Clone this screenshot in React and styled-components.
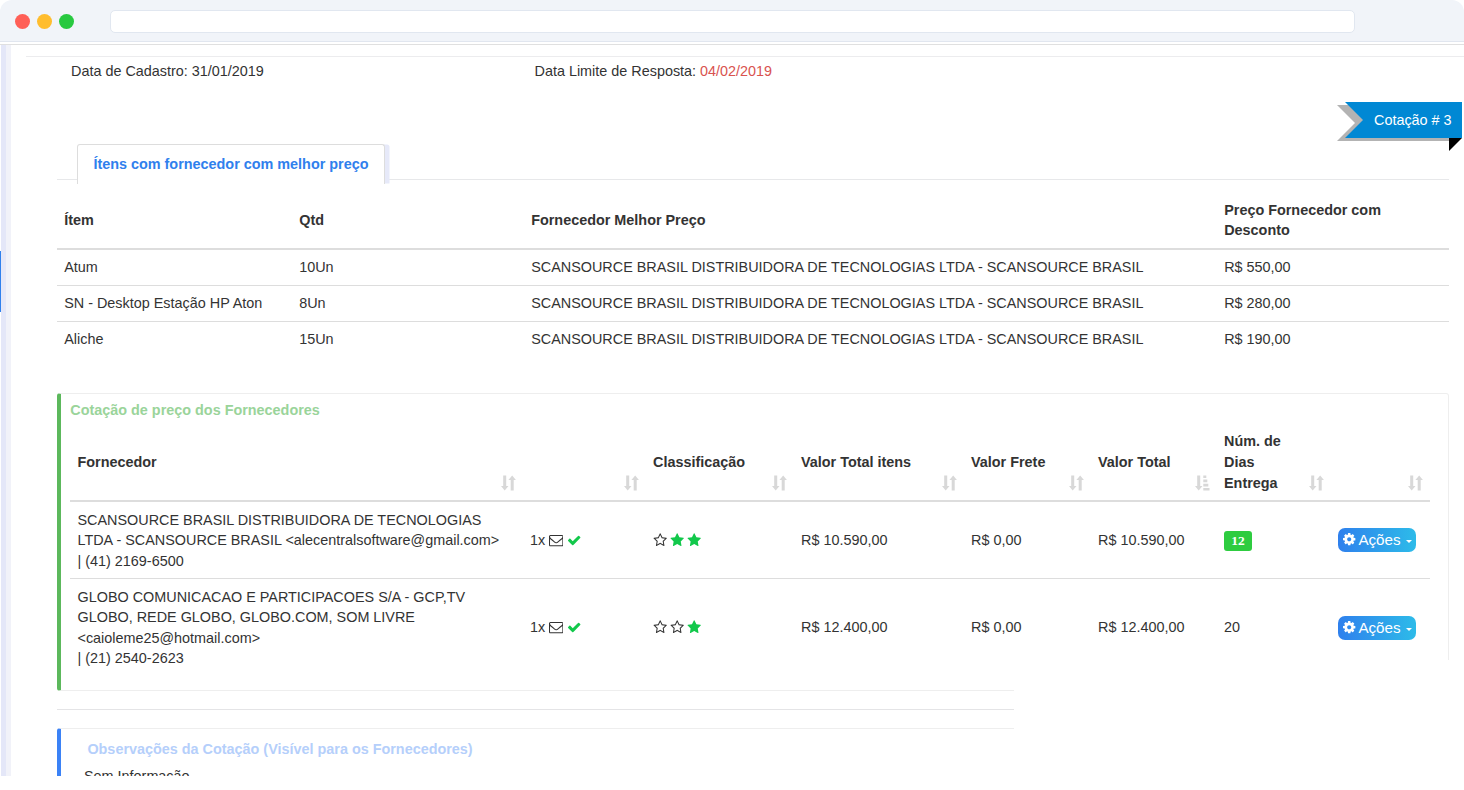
import React from 'react'
import styled, { createGlobalStyle } from 'styled-components'

const GlobalStyle = createGlobalStyle`
  * { box-sizing: border-box; }
  body {
    margin: 0;
    background: #fff;
    color: #333;
    font-family: "Liberation Sans", Arial, sans-serif;
    font-size: 14.4px;
  }
`

/* browser window */
const Window = styled.div`
  height: 790px;
  overflow: hidden;
`

const TitleBar = styled.div`
  height: 42px;
  display: flex;
  align-items: center;
  padding: 0 109px 0 15px;
  background: #f1f4f9;
  border-bottom: 1px solid #e1e6ef;
  border-radius: 12px 12px 0 0;
`

const Dots = styled.div`
  display: flex;
  gap: 7px;
  width: 95px;
  margin-top: 2px;
`

const Dot = styled.span`
  width: 15px;
  height: 15px;
  border-radius: 50%;
  background: ${({ $color }) => $color};
`

const Address = styled.div`
  flex: 1;
  height: 23px;
  margin-top: 2px;
  background: #fff;
  border: 1px solid #e1e7f0;
  border-radius: 5px;
`

const Viewport = styled.div`
  position: relative;
  display: flex;
  height: 732px;
  margin-top: 2px;
  border-top: 1px solid #e0e0e0;
  overflow: hidden;
`

const Rail = styled.div`
  width: 11px;
  flex: none;
  display: flex;
  background: linear-gradient(to right, #fff 1px, #e4e7f8 1px, #e4e7f8 6px, #f1f2f9 6px);
`

const RailMark = styled.div`
  width: 1px;
  height: 61px;
  margin-top: 206px;
  background: #2f80ed;
`

const Page = styled.div`
  flex: 1;
  padding-top: 11px;
`

const TopRule = styled.div`
  height: 1px;
  margin-left: 15px;
  background: #ececee;
`

const Content = styled.div`
  margin: 0 15px 0 46px;
`

/* dates */
const Dates = styled.div`
  display: flex;
  height: 28px;
  padding-left: 14px;
  line-height: 28px;
`

const DateField = styled.div`
  width: 463.5px;
`

const Late = styled.span`
  color: #d9534f;
`

const RibbonRow = styled.div`
  display: flex;
  justify-content: flex-end;
  height: 59px;
  padding-top: 17px;
  margin-right: -13px;
`

const Ribbon = styled.div`
  position: relative;
  width: 125px;
  height: 36px;
  padding-left: 37px;
  line-height: 36px;
  color: #fff;
  white-space: nowrap;

  &::before,
  &::after {
    content: '';
    position: absolute;
    z-index: -1;
    height: 36px;
    clip-path: polygon(0 0, 100% 0, 100% 100%, 0 100%, 18px 50%);
  }
  &::before {
    left: 0;
    top: 3px;
    width: 113px;
    background: #b3b3b3;
  }
  &::after {
    left: 8px;
    top: 0;
    width: 117px;
    background: #0088d4;
  }
`

const RibbonFold = styled.span`
  position: absolute;
  right: 0;
  top: 36px;
  width: 13px;
  height: 13px;
  background: #000;
  clip-path: polygon(0 0, 100% 0, 0 100%);
`

/* tabs */
const Tabs = styled.div`
  display: flex;
  height: 36px;
  padding-left: 20px;
  border-bottom: 1px solid #e7e8ea;
`

const Tab = styled.div`
  width: 308px;
  height: 40px;
  padding-left: 15.4px;
  line-height: 39px;
  font-weight: bold;
  color: #2f80ed;
  background: #fff;
  border: 1px solid #ddd;
  border-bottom: 0;
  border-radius: 3px 3px 0 0;
  box-shadow: 5px 0 0 -0.5px #e6e9f9;
`

/* best price table */
const ItemRow = styled.div`
  display: grid;
  grid-template-columns: 235px 232px 693px 232px;
  align-items: center;
  height: ${({ $first }) => ($first ? '35px' : '36px')};
  line-height: 20px;
  padding-bottom: 1px;
  border-top: ${({ $first }) => ($first ? '0' : '1px solid #ddd')};
`

const ItemHead = styled(ItemRow)`
  height: 70px;
  padding: 12px 0 0;
  font-weight: bold;
  border-top: 0;
  border-bottom: 2px solid #ddd;
`

const ItemCell = styled.div`
  padding: 0 7.2px;
  white-space: ${({ $wrap }) => ($wrap ? 'normal' : 'nowrap')};
`

/* suppliers */
const Callout = styled.div`
  height: ${({ $height }) => $height};
  border: 1px solid #eee;
  border-left: 4px solid ${({ $color }) => $color};
  border-radius: 3px;
`

const QuoteCallout = styled(Callout)`
  margin-top: 36px;
  padding: 6px 18px 0 9px;
`

const NotesCallout = styled(Callout)`
  padding: 10px 23px 0;
`

const CalloutTitle = styled.h4`
  margin: 0;
  padding-left: ${({ $indent }) => $indent || '0.3px'};
  font-size: 14.4px;
  line-height: 20px;
  color: ${({ $color }) => $color};
`

const QuoteRow = styled.div`
  display: grid;
  grid-template-columns: 452.5px 123px 148px 170px 127px 126px 114px 99.5px;
  align-items: center;
  height: ${({ $height }) => $height};
  line-height: 20.6px;
  border-top: ${({ $line }) => ($line ? '1px solid #ddd' : '0')};
`

const QuoteHead = styled(QuoteRow)`
  height: 82px;
  padding-top: 5px;
  line-height: 21px;
  font-weight: bold;
  border-bottom: 2px solid #ddd;
`

const QuoteHeadCell = styled.div`
  display: flex;
  align-items: center;
  justify-content: space-between;
  height: 63px;
  padding: 0 7px 0 7.5px;
`

const SortIcon = styled.svg`
  width: 15px;
  height: 16px;
  flex: none;
  align-self: flex-end;
  margin-bottom: 3px;
  fill: #d8d8d8;
`

const QuoteCell = styled.div`
  display: ${({ $inline }) => ($inline ? 'flex' : 'block')};
  align-items: center;
  gap: ${({ $gap }) => $gap || '4px'};
  padding-left: 7.5px;
  white-space: nowrap;
`

const Supplier = styled(QuoteCell)`
  padding-top: 0.8px;
`

const Glyph = styled.svg`
  flex: none;
  width: 14.4px;
  height: 14.4px;
  fill: ${({ $color }) => $color || '#333'};
`

const Stars = styled.div`
  display: flex;
  gap: 3px;
  margin-left: -0.5px;
`

const DaysBadge = styled.span`
  display: block;
  width: 28px;
  height: 20px;
  margin-top: 1px;
  border-radius: 3px;
  background: #2ecc40;
  color: #fff;
  font: bold 13.5px/19px "Liberation Serif", serif;
  text-align: center;
`

const ActionButton = styled.button`
  display: flex;
  align-items: center;
  width: 78px;
  height: 24px;
  padding: 0 4px 1px 3.5px;
  border: 0;
  border-radius: 7px;
  background: linear-gradient(to right, #2f80ed, #2dbbe9);
  color: #fff;
  font: 15.2px "Liberation Sans", Arial, sans-serif;
`

const ActionText = styled.span`
  margin: 0 5px 0 2.5px;
`

const Caret = styled.span`
  margin-top: 4px;
  border-top: 3px solid #fff;
  border-left: 3px solid transparent;
  border-right: 3px solid transparent;
`

const Divider = styled.div`
  height: 1px;
  margin: 18px 0;
  background: #e4e4e6;
`

const Notes = styled.p`
  margin: 7px 0 0;
  line-height: 21px;
`

/* empty corner that covers the lower right of the page */
const Corner = styled.div`
  position: absolute;
  right: 0;
  bottom: 0;
  width: 450px;
  height: 116px;
  background: #fff;
`

const paths = {
  star: 'M1728 647q0 22-26 48l-363 354 86 500q1 7 1 20 0 21-10.5 35.5t-30.5 14.5q-19 0-40-12l-449-236-449 236q-22 12-40 12-21 0-31.5-14.5t-10.5-35.5q0-6 2-20l86-500-364-354q-25-27-25-48 0-37 56-46l502-73 225-455q19-41 49-41t49 41l225 455 502 73q56 9 56 46z',
  starO: 'M1201 1004l306-297-422-62-189-382-189 382-422 62 306 297-73 421 378-199 377 199zm527-357q0 22-26 48l-363 354 86 500q1 7 1 20 0 50-41 50-19 0-40-12l-449-236-449 236q-22 12-40 12-21 0-31.5-14.5t-10.5-35.5q0-6 2-20l86-500-364-354q-25-27-25-48 0-37 56-46l502-73 225-455q19-41 49-41t49 41l225 455 502 73q56 9 56 46z',
  check: 'M1671 566q0 40-28 68l-724 724-136 136q-28 28-68 28t-68-28l-136-136-362-362q-28-28-28-68t28-68l136-136q28-28 68-28t68 28l294 295 656-657q28-28 68-28t68 28l136 136q28 28 28 68z',
  envelope: 'M1664 1504v-768q-32 36-69 66-268 206-426 338-51 43-83 67t-86.5 48.5-102.5 24.5h-2q-48 0-102.5-24.5t-86.5-48.5-83-67q-158-132-426-338-37-30-69-66v768q0 13 9.5 22.5t22.5 9.5h1472q13 0 22.5-9.5t9.5-22.5zm0-1051v-24.5l-.5-13-3-12.5-5.5-9-9-7.5-14-2.5h-1472q-13 0-22.5 9.5t-9.5 22.5q0 168 147 284 193 152 401 317 6 5 35 29.5t46 37.5 44.5 31.5 50.5 27.5 43 9h2q20 0 43-9t50.5-27.5 44.5-31.5 46-37.5 35-29.5q208-165 401-317 54-43 100.5-115.5t46.5-131.5zm128-37v1088q0 66-47 113t-113 47h-1472q-66 0-113-47t-47-113v-1088q0-66 47-113t113-47h1472q66 0 113 47t47 113z',
  cog: 'M1152 896q0-106-75-181t-181-75-181 75-75 181 75 181 181 75 181-75 75-181zm512-109v222q0 12-8 23t-20 13l-185 28q-19 54-39 91 35 50 107 138 10 12 10 25t-9 23q-27 37-99 108t-94 71q-12 0-26-9l-138-108q-44 23-91 38-16 136-29 186-7 28-36 28h-222q-14 0-24.5-8.5t-11.5-21.5l-28-184q-49-16-90-37l-141 107q-10 9-25 9-14 0-25-11-126-114-165-168-7-10-7-23 0-12 8-23 15-21 51-66.5t54-70.5q-27-50-41-99l-183-27q-13-2-21-12.5t-8-23.5v-222q0-12 8-23t19-13l186-28q14-46 39-92-40-57-107-138-10-12-10-24 0-10 9-23 26-36 98.5-107.5t94.5-71.5q13 0 26 10l138 107q44-23 91-38 16-136 29-186 7-28 36-28h222q14 0 24.5 8.5t11.5 21.5l28 184q49 16 90 37l142-107q9-9 24-9 13 0 25 10 129 119 165 170 7 8 7 22 0 12-8 23-15 21-51 66.5t-54 70.5q26 50 41 98l183 28q13 2 21 12.5t8 23.5z',
}

const Icon = ({ name, color }) => (
  <Glyph viewBox="0 0 1792 1792" $color={color}>
    <path d={paths[name]} />
  </Glyph>
)

const Sort = ({ sorted }) => (
  <SortIcon viewBox="0 0 15 16">
    <path d="M2.2 .5h3v10.5h2.3l-3.8 4.5-3.7-4.5h2.2z" />
    {sorted ? (
      <path d="M8.3 .5h3v2.5h-3zM8.3 4.5h4v2.7h-4zM8.3 8.7h5v2.7h-5zM8.3 12.9h6.2v2.6h-6.2z" />
    ) : (
      <path d="M9.7 15.5h3v-10.5h2.2l-3.7-4.5-3.8 4.5h2.3z" />
    )}
  </SortIcon>
)

const company = 'SCANSOURCE BRASIL DISTRIBUIDORA DE TECNOLOGIAS LTDA - SCANSOURCE BRASIL'

const items = [
  { name: 'Atum', qty: '10Un', price: 'R$ 550,00' },
  { name: 'SN - Desktop Estação HP Aton', qty: '8Un', price: 'R$ 280,00' },
  { name: 'Aliche', qty: '15Un', price: 'R$ 190,00' },
]

const quoteHeads = [
  ['Fornecedor'],
  [''],
  ['Classificação'],
  ['Valor Total itens'],
  ['Valor Frete'],
  ['Valor Total'],
  ['Núm. de', 'Dias', 'Entrega'],
  [''],
]

const quotes = [
  {
    supplier: [
      'SCANSOURCE BRASIL DISTRIBUIDORA DE TECNOLOGIAS',
      'LTDA - SCANSOURCE BRASIL <alecentralsoftware@gmail.com>',
      '| (41) 2169-6500',
    ],
    stars: [false, true, true],
    total: 'R$ 10.590,00',
    days: 12,
    best: true,
    height: '76px',
  },
  {
    supplier: [
      'GLOBO COMUNICACAO E PARTICIPACOES S/A - GCP,TV',
      'GLOBO, REDE GLOBO, GLOBO.COM, SOM LIVRE',
      '<caioleme25@hotmail.com>',
      '| (21) 2540-2623',
    ],
    stars: [false, false, true],
    total: 'R$ 12.400,00',
    days: 20,
    height: '98px',
  },
]

const App = () => {
  return (
    <Window>
      <GlobalStyle />
      <TitleBar>
        <Dots>
          <Dot $color="#ff5f57" />
          <Dot $color="#ffbd2e" />
          <Dot $color="#28c940" />
        </Dots>
        <Address />
      </TitleBar>
      <Viewport>
        <Rail>
          <RailMark />
        </Rail>
        <Page>
          <TopRule />
          <Content>
            <Dates>
              <DateField>Data de Cadastro: 31/01/2019</DateField>
              <DateField>
                Data Limite de Resposta: <Late>04/02/2019</Late>
              </DateField>
            </Dates>
            <RibbonRow>
              <Ribbon>
                Cotação # 3
                <RibbonFold />
              </Ribbon>
            </RibbonRow>
            <Tabs>
              <Tab>Ítens com fornecedor com melhor preço</Tab>
            </Tabs>
            <ItemHead>
              <ItemCell>Ítem</ItemCell>
              <ItemCell>Qtd</ItemCell>
              <ItemCell>Fornecedor Melhor Preço</ItemCell>
              <ItemCell $wrap>Preço Fornecedor com Desconto</ItemCell>
            </ItemHead>
            {items.map((item, i) => (
              <ItemRow key={item.name} $first={i === 0}>
                <ItemCell>{item.name}</ItemCell>
                <ItemCell>{item.qty}</ItemCell>
                <ItemCell>{company}</ItemCell>
                <ItemCell>{item.price}</ItemCell>
              </ItemRow>
            ))}
            <QuoteCallout $color="#5cb85c" $height="298px">
              <CalloutTitle $color="#9ad49a">Cotação de preço dos Fornecedores</CalloutTitle>
              <QuoteHead>
                {quoteHeads.map((lines, i) => (
                  <QuoteHeadCell key={i}>
                    <div>
                      {lines.map((line) => (
                        <div key={line}>{line}</div>
                      ))}
                    </div>
                    <Sort sorted={lines[0] === 'Valor Total'} />
                  </QuoteHeadCell>
                ))}
              </QuoteHead>
              {quotes.map((quote, i) => (
                <QuoteRow key={quote.total} $height={quote.height} $line={i > 0}>
                  <Supplier>
                    {quote.supplier.map((line) => (
                      <div key={line}>{line}</div>
                    ))}
                  </Supplier>
                  <QuoteCell $inline $gap="3.6px">
                    1x
                    <Icon name="envelope" />
                    <Icon name="check" color="#12c84b" />
                  </QuoteCell>
                  <QuoteCell>
                    <Stars>
                      {quote.stars.map((on, n) => (
                        <Icon key={n} name={on ? 'star' : 'starO'} color={on ? '#12c84b' : '#333'} />
                      ))}
                    </Stars>
                  </QuoteCell>
                  <QuoteCell>{quote.total}</QuoteCell>
                  <QuoteCell>R$ 0,00</QuoteCell>
                  <QuoteCell>{quote.total}</QuoteCell>
                  <QuoteCell>{quote.best ? <DaysBadge>{quote.days}</DaysBadge> : quote.days}</QuoteCell>
                  <QuoteCell>
                    <ActionButton>
                      <Icon name="cog" color="#fff" />
                      <ActionText>Ações</ActionText>
                      <Caret />
                    </ActionButton>
                  </QuoteCell>
                </QuoteRow>
              ))}
            </QuoteCallout>
            <Divider />
            <NotesCallout $color="#3b82f6" $height="80px">
              <CalloutTitle $color="#b5cffb" $indent="3.4px">
                Observações da Cotação (Visível para os Fornecedores)
              </CalloutTitle>
              <Notes>Sem Informação</Notes>
            </NotesCallout>
          </Content>
        </Page>
        <Corner />
      </Viewport>
    </Window>
  )
}

export default App
